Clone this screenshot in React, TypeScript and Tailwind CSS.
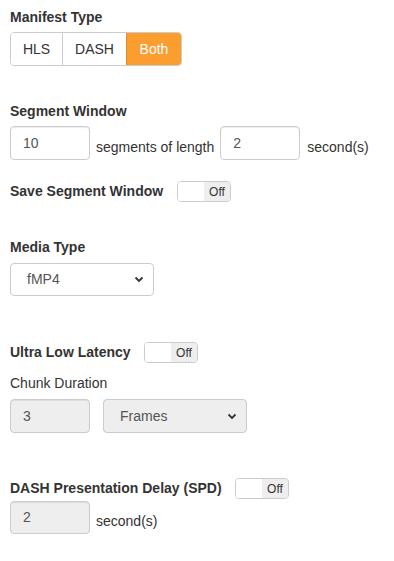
import { ReactNode } from "react";

const font = { fontFamily: '"Liberation Sans", Arial, sans-serif' };

function Label({ children, bold = true }: { children: ReactNode; bold?: boolean }) {
  return (
    <div className={bold ? "h-5 text-[14px] leading-5 font-bold text-[#333]" : "h-5 text-[14px] leading-5 text-[#333]"}>
      {children}
    </div>
  );
}

function Field({ value, disabled = false, className = "" }: { value: string; disabled?: boolean; className?: string }) {
  return (
    <div
      className={
        "w-[80px] flex items-center pl-3 border border-[#ccc] rounded-[4px] text-[14px] text-[#555] shadow-[inset_0_1px_1px_rgba(0,0,0,0.075)] " +
        (disabled ? "bg-[#eee] " : "bg-white ") +
        className
      }
    >
      {value}
    </div>
  );
}

function Select({ value, disabled = false, className = "" }: { value: string; disabled?: boolean; className?: string }) {
  return (
    <div
      className={
        "w-[144px] flex items-center justify-between pl-4 pr-[9px] border border-[#ccc] rounded-[4px] text-[14px] text-[#555] " +
        (disabled ? "bg-[#eee] " : "bg-white ") +
        className
      }
    >
      <span>{value}</span>
      <svg width="10" height="7" viewBox="0 0 10 7">
        <path d="M1.5 1.5 L5 5 L8.5 1.5" fill="none" stroke="#333" strokeWidth="1.8" />
      </svg>
    </div>
  );
}

function Toggle() {
  return (
    <div className="flex w-[54px] h-[21px] border border-[#ccc] rounded-[4px] overflow-hidden">
      <div className="w-[26px] bg-white" />
      <div className="flex-1 bg-[#eee] flex items-center justify-center text-[12px] text-[#333]">Off</div>
    </div>
  );
}

export default function App() {
  return (
    <div className="w-[394px] h-[561px] bg-white pl-[10px] pt-[7px]" style={font}>
      <Label>Manifest Type</Label>
      <div className="mt-[5px] flex h-[34px] w-fit border border-[#ccc] rounded-[4px] text-[14px] overflow-hidden">
        <div className="w-[51px] flex items-center justify-center text-[#333] bg-white">HLS</div>
        <div className="w-[64px] flex items-center justify-center text-[#333] bg-white border-l border-[#ccc]">DASH</div>
        <div className="w-[55px] flex items-center justify-center text-white bg-[#fb9d2f] border-l border-[#e38b26]">Both</div>
      </div>

      <div className="mt-[35px]">
        <Label>Segment Window</Label>
      </div>
      <div className="mt-[5px] flex items-end text-[14px] text-[#333]">
        <Field value="10" className="h-[34px]" />
        <span className="ml-[6px] mb-[3px] leading-5">segments of length</span>
        <Field value="2" className="h-[34px] ml-[6px]" />
        <span className="ml-[7px] mb-[3px] leading-5">second(s)</span>
      </div>

      <div className="mt-[21px] flex items-center h-[21px]">
        <div className="w-[167px] -mt-[2px]">
          <Label>Save Segment Window</Label>
        </div>
        <Toggle />
      </div>

      <div className="mt-[35px]">
        <Label>Media Type</Label>
      </div>
      <Select value="fMP4" className="mt-[6px] h-[33px]" />

      <div className="mt-[46px] flex items-center h-[21px]">
        <div className="w-[134px] -mt-[2px]">
          <Label>Ultra Low Latency</Label>
        </div>
        <Toggle />
      </div>

      <div className="mt-[10px]">
        <Label bold={false}>Chunk Duration</Label>
      </div>
      <div className="mt-[6px] flex gap-[13px]">
        <Field value="3" disabled className="h-[34px]" />
        <Select value="Frames" disabled className="h-[34px]" />
      </div>

      <div className="mt-[45px] flex items-center h-[21px]">
        <div className="w-[225px] -mt-[2px]">
          <Label>DASH Presentation Delay (SPD)</Label>
        </div>
        <Toggle />
      </div>
      <div className="mt-[2px] flex items-end text-[14px] text-[#333]">
        <Field value="2" disabled className="h-[33px]" />
        <span className="ml-[6px] mb-[3px] leading-5">second(s)</span>
      </div>
    </div>
  );
}
